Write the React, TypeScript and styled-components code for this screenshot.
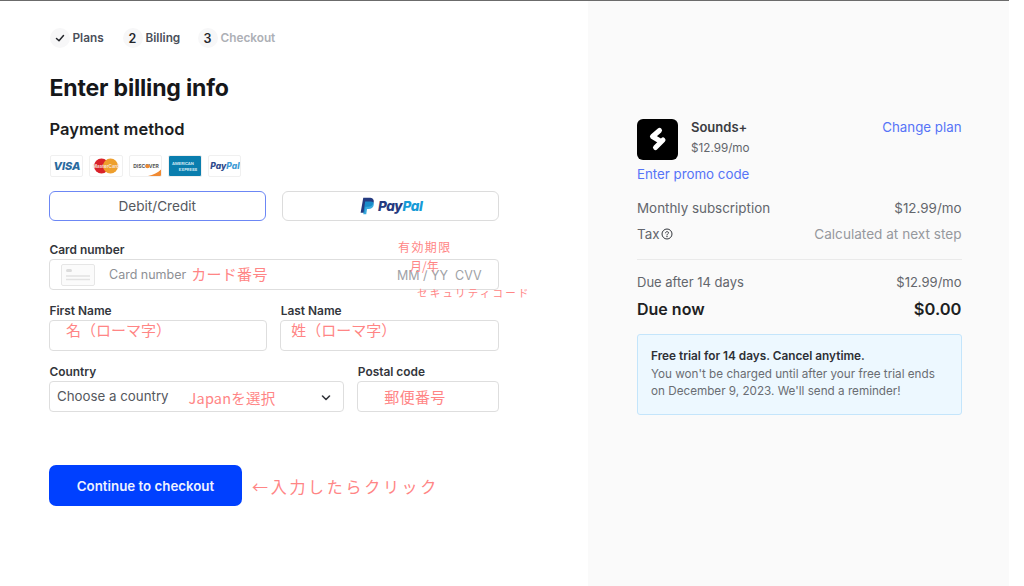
import styled, { createGlobalStyle } from 'styled-components'

const cjk = `"Inter", "Noto Sans CJK JP", sans-serif`
const noteFont = `"Noto Sans CJK JP", "Inter", sans-serif`
const noteColor = '#ff8585'

const GlobalStyle = createGlobalStyle`
  html, body {
    margin: 0;
    padding: 0;
    background: #fff;
  }
  * {
    box-sizing: border-box;
  }
  body {
    font-family: ${cjk};
    -webkit-font-smoothing: antialiased;
  }
`

const Frame = styled.div`
  width: 1009px;
  height: 586px;
  display: flex;
  border-top: 1px solid #6b6b6b;
`

const Main = styled.main`
  width: 588px;
  padding: 27px 89.5px 0 49px;
`

const Stepper = styled.ol`
  display: flex;
  align-items: center;
  list-style: none;
  margin: 0;
  padding: 0 0 0 0.5px;
  height: 20px;
`

const Step = styled.li<{ $width: number }>`
  display: flex;
  align-items: center;
  gap: 3px;
  width: ${p => p.$width}px;
`

const StepDot = styled.span`
  width: 20px;
  height: 20px;
  border-radius: 50%;
  background: #f7f7f8;
  display: flex;
  align-items: center;
  justify-content: center;
  font-size: 12.5px;
  font-weight: 600;
  color: #24262b;
`

const StepLabel = styled.span<{ $muted?: boolean }>`
  font-size: 11.8px;
  font-weight: 600;
  color: ${p => (p.$muted ? '#adb0b6' : '#4a4f5a')};
`

const Title = styled.h1`
  margin: 24px 0 0;
  padding-left: 0.5px;
  font-size: 23.1px;
  line-height: 32px;
  font-weight: 700;
  letter-spacing: -0.2px;
  color: #16171a;
`

const Subtitle = styled.h2`
  margin: 13px 0 0;
  padding-left: 0.5px;
  font-size: 16.5px;
  line-height: 24px;
  font-weight: 600;
  color: #1c1d21;
`

const CardLogos = styled.div`
  display: flex;
  gap: 6px;
  margin-top: 14px;
  padding-left: 0.5px;
`

const CardLogo = styled.span<{ $bg?: string }>`
  width: 33.6px;
  height: 22px;
  border: 1px solid #f0f0f0;
  border-radius: 2px;
  background: ${p => p.$bg || '#fff'};
  overflow: hidden;
  display: block;
  svg {
    display: block;
  }
`

const MethodRow = styled.div`
  display: flex;
  gap: 16.5px;
  margin-top: 14px;
`

const MethodButton = styled.button<{ $active?: boolean }>`
  flex: 1;
  height: 30px;
  padding: 0;
  border-radius: 6px;
  background: #fff;
  border: 1px solid ${p => (p.$active ? '#6c87f5' : '#dcdcdc')};
  font-family: inherit;
  font-size: 13.6px;
  color: #55585e;
  display: flex;
  align-items: center;
  justify-content: center;
  gap: 2px;
`

const PayPalWord = styled.span`
  font-size: 13.5px;
  font-weight: 800;
  font-style: italic;
  letter-spacing: -0.3px;
  color: #253b80;
  em {
    color: #179bd7;
  }
`

const Form = styled.div`
  margin-top: 22px;
  display: grid;
  grid-template-columns: repeat(12, 1fr);
  column-gap: 13px;
  row-gap: 14px;
`

const Field = styled.div<{ $span: number }>`
  grid-column: span ${p => p.$span};
  min-width: 0;
`

const Label = styled.div`
  padding-left: 0.5px;
  font-size: 11.9px;
  line-height: 14px;
  font-weight: 600;
  color: #33363c;
  margin-bottom: 2px;
`

const InputBox = styled.div<{ $height?: number; $pad?: number }>`
  position: relative;
  height: ${p => p.$height || 31}px;
  border: 1px solid #dedede;
  border-radius: 4px;
  background: #fff;
  display: flex;
  align-items: center;
  padding-left: ${p => p.$pad ?? 8}px;
`

const Placeholder = styled.span`
  font-size: 12.5px;
  color: #8e9095;
  white-space: nowrap;
`

const SelectValue = styled.span`
  font-size: 13.3px;
  color: #55585e;
  white-space: nowrap;
  margin-top: -1px;
`

const Note = styled.span<{ $size?: number; $spacing?: number; $shift?: number; $gap?: number }>`
  font-family: ${noteFont};
  font-size: ${p => p.$size || 15}px;
  letter-spacing: ${p => p.$spacing || 0}px;
  margin-top: ${p => p.$shift || 0}px;
  margin-left: ${p => p.$gap || 0}px;
  text-spacing-trim: space-all;
  color: ${noteColor};
  white-space: nowrap;
`

const CardGlyph = styled.svg`
  margin-right: 14px;
  flex: none;
`

const ExpiryHints = styled.span`
  position: absolute;
  left: 347px;
  top: 8px;
  font-size: 12.5px;
  color: #a0a2a6;
  white-space: nowrap;
`

const FloatingNote = styled.span<{ $left: number; $top: number; $size?: number; $spacing?: number }>`
  position: absolute;
  left: ${p => p.$left}px;
  top: ${p => p.$top}px;
  font-family: ${noteFont};
  font-size: ${p => p.$size || 12}px;
  letter-spacing: ${p => p.$spacing || 0}px;
  line-height: 1;
  color: ${noteColor};
  white-space: nowrap;
`

const Chevron = styled.svg`
  position: absolute;
  right: 12px;
  top: 12px;
`

const SubmitRow = styled.div`
  display: flex;
  align-items: center;
  gap: 10px;
  margin-top: 53px;
`

const SubmitButton = styled.button`
  width: 193px;
  height: 41px;
  border: 0;
  border-radius: 7px;
  background: #0040ff;
  color: #eef2ff;
  font-family: inherit;
  font-size: 13.3px;
  font-weight: 600;
`

const Aside = styled.aside`
  width: 421px;
  background: #fafafa;
  padding: 118px 47.5px 0 49px;
`

const Product = styled.div`
  display: flex;
  align-items: flex-start;
`

const ProductIcon = styled.div`
  width: 41px;
  height: 41px;
  border-radius: 6px;
  background: #000;
  flex: none;
`

const ProductInfo = styled.div`
  margin-left: 13px;
  flex: 1;
`

const ProductName = styled.div`
  font-size: 13px;
  line-height: 16px;
  font-weight: 600;
  color: #3a3c41;
`

const ProductPrice = styled.div`
  margin-top: 5px;
  font-size: 11.7px;
  line-height: 16px;
  color: #63666c;
`

const Link = styled.a`
  font-size: 13.3px;
  color: #5674f7;
  line-height: 18px;
`

const ChangePlan = styled(Link)`
  margin-top: -1px;
`

const Promo = styled.div`
  margin-top: 5px;
  line-height: 18px;
  display: flex;
`

const Line = styled.div<{ $top: number; $size?: number }>`
  display: flex;
  justify-content: space-between;
  align-items: center;
  margin-top: ${p => p.$top}px;
  font-size: ${p => p.$size || 13.4}px;
  line-height: 18px;
  color: #63666c;
`

const Muted = styled.span`
  font-size: 13.6px;
  color: #96989d;
`

const TaxLabel = styled.span`
  display: flex;
  align-items: center;
  gap: 1px;
`

const Divider = styled.hr`
  margin: 16px 0 0;
  border: 0;
  border-top: 1px solid #eaeaea;
`

const TotalLine = styled.div`
  display: flex;
  justify-content: space-between;
  align-items: center;
  margin-top: 7px;
  font-size: 16px;
  line-height: 22px;
  font-weight: 600;
  color: #1e1f23;
`

const TotalAmount = styled.span`
  font-size: 16.5px;
`

const Notice = styled.div`
  margin-top: 14px;
  height: 81px;
  padding: 13px 13px 0;
  background: #edf8ff;
  border: 1px solid #c4e5fb;
  border-radius: 3px;
  font-size: 11.7px;
  line-height: 17.5px;
  color: #6a6d73;
`

const NoticeTitle = styled.div`
  font-size: 11.8px;
  font-weight: 600;
  color: #2e3036;
`

function VisaLogo() {
  return (
    <CardLogo>
      <svg width="32" height="20" viewBox="0 0 32 20">
        <text x="16" y="14" textAnchor="middle" fontSize="11" fontWeight="800" fontStyle="italic" fill="#2a6a9e" fontFamily="Inter, sans-serif">VISA</text>
      </svg>
    </CardLogo>
  )
}

function MasterLogo() {
  return (
    <CardLogo>
      <svg width="32" height="20" viewBox="0 0 32 20">
        <circle cx="11.5" cy="10" r="7.5" fill="#d9222a" />
        <circle cx="20.5" cy="10" r="7.5" fill="#ee9f2d" />
        <text x="16" y="12" textAnchor="middle" fontSize="4.6" fontWeight="700" fill="#f6e3d8" fontFamily="Inter, sans-serif">MasterCard</text>
      </svg>
    </CardLogo>
  )
}

function DiscoverLogo() {
  return (
    <CardLogo>
      <svg width="32" height="20" viewBox="0 0 32 20">
        <path d="M32 12.5 V20 H18 C24 19 29 16 32 12.5 Z" fill="#f08a32" />
        <text x="16" y="12" textAnchor="middle" fontSize="5" fontWeight="700" fill="#555" fontFamily="Inter, sans-serif">DISCOVER</text>
        <circle cx="17.6" cy="10.2" r="2" fill="#f08a32" />
      </svg>
    </CardLogo>
  )
}

function AmexLogo() {
  return (
    <CardLogo $bg="#0a7eae">
      <svg width="32" height="20" viewBox="0 0 32 20">
        <text x="14" y="8.5" textAnchor="middle" fontSize="4" fontWeight="700" fill="#cfe8f3" fontFamily="Inter, sans-serif">AMERICAN</text>
        <text x="19" y="14.5" textAnchor="middle" fontSize="4" fontWeight="700" fill="#cfe8f3" fontFamily="Inter, sans-serif">EXPRESS</text>
      </svg>
    </CardLogo>
  )
}

function PayPalLogo() {
  return (
    <CardLogo>
      <svg width="32" height="20" viewBox="0 0 32 20">
        <text x="16" y="13" textAnchor="middle" fontSize="8.500" fontWeight="800" fontStyle="italic" fontFamily="Inter, sans-serif" fill="#2d4a8c">
          Pay<tspan fill="#3e9bd5">Pal</tspan>
        </text>
      </svg>
    </CardLogo>
  )
}

export default function App() {
  return (
    <>
      <GlobalStyle />
      <Frame>
        <Main>
          <Stepper>
            <Step $width={73}>
              <StepDot>
                <svg width="10" height="10" viewBox="0 0 10 10" fill="none" stroke="#24262b" strokeWidth="1.5" strokeLinecap="round" strokeLinejoin="round">
                  <path d="M1.5 5.5 L4 7.8 L8.5 2.6" />
                </svg>
              </StepDot>
              <StepLabel>Plans</StepLabel>
            </Step>
            <Step $width={75}>
              <StepDot>2</StepDot>
              <StepLabel>Billing</StepLabel>
            </Step>
            <Step $width={90}>
              <StepDot>3</StepDot>
              <StepLabel $muted>Checkout</StepLabel>
            </Step>
          </Stepper>

          <Title>Enter billing info</Title>
          <Subtitle>Payment method</Subtitle>

          <CardLogos>
            <VisaLogo />
            <MasterLogo />
            <DiscoverLogo />
            <AmexLogo />
            <PayPalLogo />
          </CardLogos>

          <MethodRow>
            <MethodButton $active>Debit/Credit</MethodButton>
            <MethodButton>
              <svg width="18" height="18" viewBox="0 0 24 24">
                <path d="M7 1h8c4 0 6.500 2 6 5.500C20.300 11 17 13 13 13h-3l-1.300 8H3.500z" fill="#253b80" />
                <path d="M9.500 6h7c3.500 0 5 1.500 4.500 4.500-.6 3.700-3.500 5.500-7 5.500h-2l-1 7H7z" fill="#179bd7" opacity="0.85" />
              </svg>
              <PayPalWord>
                Pay<em>Pal</em>
              </PayPalWord>
            </MethodButton>
          </MethodRow>

          <Form>
            <Field $span={12}>
              <Label>Card number</Label>
              <InputBox $pad={11}>
                <CardGlyph width="34" height="22" viewBox="0 0 34 22" fill="none">
                  <rect x="0.5" y="0.5" width="33" height="21" rx="1.500" fill="#fbfbfb" stroke="#e6e6e6" />
                  <rect x="5" y="5" width="6" height="3" rx="1.500" fill="#dcdcdc" />
                  <path d="M5 12h24M5 15.500h24" stroke="#e2e2e2" strokeWidth="1.500" />
                </CardGlyph>
                <Placeholder>Card number</Placeholder>
                <Note $spacing={0.3} $shift={-3} $gap={5}>カード番号</Note>
                <ExpiryHints>MM / YY&nbsp;&nbsp;CVV</ExpiryHints>
                <FloatingNote $left={348} $top={-19} $spacing={1.400}>有効期限</FloatingNote>
                <FloatingNote $left={360} $top={0}>月/年</FloatingNote>
                <FloatingNote $left={367} $top={28} $size={10.500} $spacing={2.200}>セキュリティコード</FloatingNote>
              </InputBox>
            </Field>

            <Field $span={6}>
              <Label>First Name</Label>
              <InputBox $pad={16}>
                <Note $shift={-12}>名（ローマ字）</Note>
              </InputBox>
            </Field>
            <Field $span={6}>
              <Label>Last Name</Label>
              <InputBox $pad={10}>
                <Note $shift={-12}>姓（ローマ字）</Note>
              </InputBox>
            </Field>

            <Field $span={8}>
              <Label>Country</Label>
              <InputBox $pad={7}>
                <SelectValue>Choose a country</SelectValue>
                <Note $size={14.500} $spacing={0.2} $shift={1} $gap={20}>Japanを選択</Note>
                <Chevron width="10" height="8" viewBox="0 0 10 8" fill="none" stroke="#33363c" strokeWidth="1.600" strokeLinecap="round" strokeLinejoin="round">
                  <path d="M1.500 2 L5 5.500 L8.500 2" />
                </Chevron>
              </InputBox>
            </Field>
            <Field $span={4}>
              <Label>Postal code</Label>
              <InputBox $pad={26}>
                <Note $spacing={0.3} $shift={-1}>郵便番号</Note>
              </InputBox>
            </Field>
          </Form>

          <SubmitRow>
            <SubmitButton>Continue to checkout</SubmitButton>
            <Note $size={16} $spacing={2.700}>←入力したらクリック</Note>
          </SubmitRow>
        </Main>

        <Aside>
          <Product>
            <ProductIcon>
              <svg width="41" height="41" viewBox="0 0 41 41" fill="none" stroke="#fff" strokeWidth="5" strokeLinecap="round" strokeLinejoin="round">
                <path d="M22.500 11.500 L15.500 17.500 L23 22" />
                <path d="M26 21 L18.500 28.500" />
              </svg>
            </ProductIcon>
            <ProductInfo>
              <ProductName>Sounds+</ProductName>
              <ProductPrice>$12.99/mo</ProductPrice>
            </ProductInfo>
            <ChangePlan>Change plan</ChangePlan>
          </Product>
          <Promo>
            <Link>Enter promo code</Link>
          </Promo>
          <Line $top={16}>
            <span>Monthly subscription</span>
            <span>$12.99/mo</span>
          </Line>
          <Line $top={8}>
            <TaxLabel>
              Tax
              <svg width="12" height="12" viewBox="0 0 12 12" fill="none" stroke="#33363c" strokeWidth="1">
                <circle cx="6" cy="6" r="5" />
                <path d="M4.500 4.800 C4.500 3.200 7.500 3.200 7.500 4.800 C7.500 5.900 6 5.800 6 7" strokeLinecap="round" />
                <circle cx="6" cy="8.700" r="0.300" />
              </svg>
            </TaxLabel>
            <Muted>Calculated at next step</Muted>
          </Line>
          <Divider />
          <Line $top={13} $size={13}>
            <span>Due after 14 days</span>
            <span>$12.99/mo</span>
          </Line>
          <TotalLine>
            <span>Due now</span>
            <TotalAmount>$0.00</TotalAmount>
          </TotalLine>
          <Notice>
            <NoticeTitle>Free trial for 14 days. Cancel anytime.</NoticeTitle>
            You won't be charged until after your free trial ends
            <br />
            on December 9, 2023. We'll send a reminder!
          </Notice>
        </Aside>
      </Frame>
    </>
  )
}
